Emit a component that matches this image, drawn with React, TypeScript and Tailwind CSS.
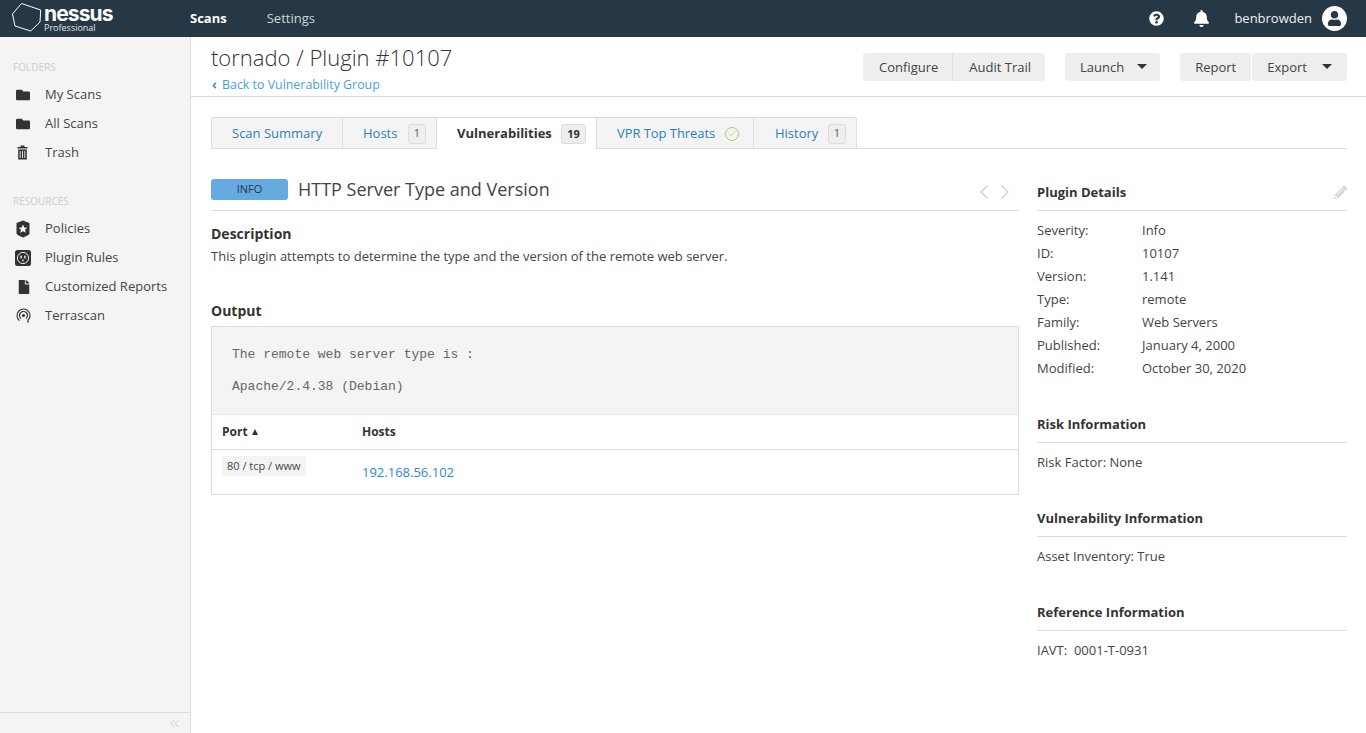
import { ChevronLeft, ChevronRight, ChevronsLeft, Check } from 'lucide-react';
import { FaBell, FaQuestionCircle, FaFolder, FaFile, FaPencilAlt, FaUser } from 'react-icons/fa';

function ShieldIcon() {
  return (
    <svg width="14" height="18" viewBox="0 0 14 18" className="ml-[1px] shrink-0">
      <path d="M7 0.5 L13.5 3 V13.5 Q13.5 15 7 17.5 Q0.5 15 0.5 13.5 V3 Z" fill="#333" />
      <path d="M7 4.5 L8.3 7.5 L11.3 7.7 L9 9.8 L9.8 12.8 L7 11.2 L4.2 12.8 L5 9.8 L2.7 7.7 L5.7 7.5 Z" fill="#f5f5f5" />
    </svg>
  );
}

function PlugIcon() {
  return (
    <svg width="16" height="16" viewBox="0 0 16 16" className="shrink-0">
      <rect width="16" height="16" rx="2.5" fill="#333" />
      <circle cx="8" cy="8" r="5.6" fill="none" stroke="#e8e8e8" strokeWidth="1" />
      <rect x="5.4" y="5.6" width="1.4" height="2.8" fill="#f5f5f5" />
      <rect x="9.2" y="5.6" width="1.4" height="2.8" fill="#f5f5f5" />
      <rect x="7.3" y="9.6" width="1.4" height="1.6" fill="#f5f5f5" />
    </svg>
  );
}

function TrashIcon() {
  return (
    <svg width="11" height="15" viewBox="0 0 11 15" className="ml-[2px] shrink-0">
      <path d="M3.5 2 V0.5 H7.5 V2 H10.5 V3.5 H0.5 V2 Z" fill="#333" />
      <path d="M1.2 4.5 H9.8 V14.5 H1.2 Z" fill="#333" />
      <path d="M3.2 6 V13 M5.5 6 V13 M7.8 6 V13" stroke="#f5f5f5" strokeWidth="0.9" />
    </svg>
  );
}

function ScanIcon() {
  return (
    <svg width="15" height="15" viewBox="0 0 15 15" fill="none" stroke="#333" className="ml-[1px] shrink-0">
      <path d="M3.5 12.6 A6.5 6.5 0 1 1 11.5 12.6" strokeWidth="1.2" />
      <path d="M5 10.6 A4 4 0 1 1 10 10.6" strokeWidth="1.2" />
      <path d="M11.6 12.6 L12.5 14.5" strokeWidth="1.3" />
      <circle cx="7.5" cy="7.5" r="1.6" fill="#333" stroke="none" />
    </svg>
  );
}

function SideItem({ icon, label }: { icon: React.ReactNode; label: string }) {
  return (
    <div className="flex items-center h-[29px] pl-[15px] text-[13px] text-[#444]">
      <span className="w-[30px] flex items-center">{icon}</span>
      {label}
    </div>
  );
}

function Btn({ children, caret, className = '' }: { children: React.ReactNode; caret?: string; className?: string }) {
  return (
    <div className={`h-[28px] pt-[1px] bg-[#eeeeee] flex items-center text-[13px] text-[#444] ${className}`}>
      {children}
      {caret && <span className={`${caret} -mt-[2px] w-0 h-0 border-x-[5px] border-x-transparent border-t-[5px] border-t-[#333]`} />}
    </div>
  );
}

function Badge({ children, bold }: { children: React.ReactNode; bold?: boolean }) {
  return (
    <span className={`ml-auto h-[20px] flex items-center justify-center rounded-[3px] border border-[#dcdcdc] bg-[#eeeeee] text-[11px] ${bold ? 'font-bold text-[#333] w-[25px]' : 'text-[#555] w-[18px]'}`}>
      {children}
    </span>
  );
}

function Tab({ children, active, className = '' }: { children: React.ReactNode; active?: boolean; className?: string }) {
  if (active) {
    return (
      <div className={`h-[32px] pt-[1px] flex items-center whitespace-nowrap bg-white border-t border-[#dcdcdc] -mb-px text-[13px] font-bold text-[#333] ${className}`}>
        {children}
      </div>
    );
  }
  return (
    <div className={`h-[32px] pt-[1px] flex items-center whitespace-nowrap bg-[#f4f4f4] border border-[#dcdcdc] -mb-px -ml-px first:ml-0 text-[13px] text-[#2a7fc1] ${className}`}>
      {children}
    </div>
  );
}

function SectionHead({ title, children, className = '' }: { title: string; children?: React.ReactNode; className?: string }) {
  return (
    <div className={`flex items-center justify-between border-b border-[#dcdcdc] pt-[1px] text-[13px] font-bold text-[#333] ${className}`}>
      {title}
      {children}
    </div>
  );
}

const details = [
  ['Severity:', 'Info'],
  ['ID:', '10107'],
  ['Version:', '1.141'],
  ['Type:', 'remote'],
  ['Family:', 'Web Servers'],
  ['Published:', 'January 4, 2000'],
  ['Modified:', 'October 30, 2020'],
];

export default function App() {
  return (
    <div className="h-[733px] flex flex-col overflow-hidden bg-white font-['Open_Sans',sans-serif] text-[#444]">
      <header className="h-[37px] shrink-0 bg-[#263746] flex items-center text-white">
        <div className="w-[190px] h-[37px] pl-[12px] flex items-start">
          <svg width="30" height="29" viewBox="0 0 30 29" fill="none" stroke="#fff" strokeWidth="1" className="mt-[3px] shrink-0">
            <path d="M9.5 0.5 L28.7 7 L28 19 L18.7 28 L3 23 L0.5 11 Z" />
          </svg>
          <div className="ml-[2px] pt-[6px] flex flex-col">
            <span className="font-['Inter',sans-serif] text-[21px] font-bold leading-[15px] tracking-[-0.9px]">nessus</span>
            <span className="mt-[2px] text-[9px] leading-[9px] text-[#e6e6e6]">Professional</span>
          </div>
        </div>
        <span className="text-[13px] font-bold">Scans</span>
        <span className="ml-[40px] text-[13px] text-[#d0d5d9]">Settings</span>
        <div className="ml-auto flex items-center pr-[19px]">
          <FaQuestionCircle size={15} />
          <FaBell size={17} className="ml-[29px]" />
          <span className="ml-[24px] text-[13px] text-[#eef0f2]">benbrowden</span>
          <span className="ml-[10px] w-[25px] h-[25px] rounded-full bg-white flex items-center justify-center overflow-hidden">
            <FaUser size={15} className="text-[#263746]" />
          </span>
        </div>
      </header>

      <div className="flex flex-1 min-h-0">
        <aside className="w-[191px] shrink-0 bg-[#f4f4f4] border-r border-[#dcdcdc] flex flex-col">
          <div className="flex-1 pt-[23px]">
            <div className="pl-[13px] text-[10px] leading-[14px] text-[#cccccc] mb-[6px]">FOLDERS</div>
            <SideItem icon={<FaFolder size={14} className="ml-[1px] text-[#333]" />} label="My Scans" />
            <SideItem icon={<FaFolder size={14} className="ml-[1px] text-[#333]" />} label="All Scans" />
            <SideItem icon={<TrashIcon />} label="Trash" />
            <div className="pl-[13px] mt-[27px] text-[10px] leading-[14px] text-[#cccccc] mb-[6px]">RESOURCES</div>
            <SideItem icon={<ShieldIcon />} label="Policies" />
            <SideItem icon={<PlugIcon />} label="Plugin Rules" />
            <SideItem icon={<FaFile size={14} className="text-[#333] ml-[2px]" />} label="Customized Reports" />
            <SideItem icon={<ScanIcon />} label="Terrascan" />
          </div>
          <div className="h-[21px] border-t border-[#dcdcdc] flex items-center justify-end pr-[8px]">
            <ChevronsLeft size={15} strokeWidth={1.5} className="text-[#cccccc]" />
          </div>
        </aside>

        <main className="flex-1 min-w-0 flex flex-col">
          <div className="h-[60px] shrink-0 border-b border-[#dcdcdc] pl-[20px] pr-[19px] flex justify-between">
            <div>
              <h1 className="text-[22px] font-light leading-[32px] mt-[4px] text-[#333]">tornado / Plugin #10107</h1>
              <a className="mt-[3px] flex items-center text-[12.4px] leading-[18px] text-[#4a9fdb]">
                <ChevronLeft size={9} strokeWidth={4} className="-ml-[1px] text-[#2a7fc1] mr-[3px]" />
                Back to Vulnerability Group
              </a>
            </div>
            <div className="flex items-start pt-[16px]">
              <Btn className="pl-[16px] pr-[14px] rounded-l-[3px] border-r border-[#e0e0e0]">Configure</Btn>
              <Btn className="pl-[16px] pr-[14px] rounded-r-[3px]">Audit Trail</Btn>
              <Btn caret="ml-[13px]" className="ml-[20px] pl-[15px] pr-[13px] rounded-[3px]">Launch</Btn>
              <Btn className="ml-[20px] px-[15px] rounded-[3px]">Report</Btn>
              <Btn caret="ml-[15px]" className="ml-[1px] px-[15px] rounded-[3px]">Export</Btn>
            </div>
          </div>

          <div className="pl-[20px] pr-[19px]">
            <div className="mt-[20px] flex border-b border-[#dcdcdc] h-[32px]">
              <Tab className="w-[132px] pl-[20px] rounded-tl-[2px]">Scan Summary</Tab>
              <Tab className="w-[95px] pl-[20px] pr-[10px]">Hosts<Badge>1</Badge></Tab>
              <Tab active className="w-[160px] pl-[20px] pr-[11px]">Vulnerabilities<Badge bold>19</Badge></Tab>
              <Tab className="w-[158px] pl-[20px] pr-[14px] tracking-[-0.06px]">
                VPR Top Threats
                <span className="ml-auto w-[14px] h-[14px] rounded-full border border-[#a3cf75] flex items-center justify-center">
                  <Check size={10} strokeWidth={1.5} className="text-[#a3cf75]" />
                </span>
              </Tab>
              <Tab className="w-[104px] pl-[21px] pr-[10px] rounded-tr-[2px]">History<Badge>1</Badge></Tab>
            </div>

            <div className="flex justify-between">
              <div className="w-[808px]">
                <div className="mt-[20px] h-[42px] border-b border-[#dcdcdc] flex items-start">
                  <span className="mt-[10px] w-[77px] h-[21px] bg-[#66aae2] rounded-[3px] flex items-center justify-center text-[11px] text-[#263746]">INFO</span>
                  <span className="ml-[10px] mt-[7px] text-[18px] leading-[26px] text-[#444]">HTTP Server Type and Version</span>
                  <span className="ml-auto mt-[11px] mr-[2px] flex text-[#cccccc]">
                    <ChevronLeft size={24} strokeWidth={1.25} />
                    <ChevronRight size={24} strokeWidth={1.25} className="-ml-[3px]" />
                  </span>
                </div>
                <h2 className="mt-[13px] text-[14px] leading-[20px] font-bold text-[#333]">Description</h2>
                <p className="mt-[3px] text-[13px] leading-[18px]">This plugin attempts to determine the type and the version of the remote web server.</p>
                <h2 className="mt-[36px] text-[14px] leading-[20px] font-bold text-[#333]">Output</h2>
                <div className="mt-[5px] border border-[#dcdcdc]">
                  <pre className="h-[88px] bg-[#f4f4f4] border-b border-dotted border-[#dcdcdc] pl-[20px] pt-[20px] font-['Liberation_Mono',monospace] text-[13px] leading-[16px] text-[#666]">{'The remote web server type is :\n\nApache/2.4.38 (Debian)'}</pre>
                  <div className="h-[35px] border-b border-[#dcdcdc] flex items-center text-[12px] font-bold text-[#333]">
                    <span className="w-[150px] pl-[10px] flex items-center">
                      Port
                      <span className="ml-[4px] w-0 h-0 border-x-[3.5px] border-x-transparent border-b-[6px] border-b-[#333]" />
                    </span>
                    Hosts
                  </div>
                  <div className="h-[44px] flex items-start">
                    <span className="w-[150px] pl-[10px] pt-[6px]">
                      <span className="block w-fit h-[20px] px-[5px] bg-[#f4f4f4] rounded-[3px] text-[11px] leading-[20px]">80 / tcp / www</span>
                    </span>
                    <a className="mt-[13px] text-[13px] leading-[18px] text-[#2a8ad4]">192.168.56.102</a>
                  </div>
                </div>
              </div>

              <div className="w-[310px] text-[13px]">
                <SectionHead title="Plugin Details" className="mt-[25px] h-[37px]">
                  <FaPencilAlt size={13} className="text-[#d5d5d5]" />
                </SectionHead>
                <dl className="mt-[8px]">
                  {details.map(([k, v]) => (
                    <div key={k} className="flex h-[23px] items-center">
                      <dt className="w-[105px]">{k}</dt>
                      <dd>{v}</dd>
                    </div>
                  ))}
                </dl>
                <SectionHead title="Risk Information" className="mt-[26px] h-[37px]" />
                <p className="mt-[10px] leading-[18px]">Risk Factor: None</p>
                <SectionHead title="Vulnerability Information" className="mt-[29px] h-[37px]" />
                <p className="mt-[10px] leading-[18px]">Asset Inventory: True</p>
                <SectionHead title="Reference Information" className="mt-[29px] h-[37px]" />
                <p className="mt-[10px] leading-[18px] whitespace-pre">IAVT:  0001-T-0931</p>
              </div>
            </div>
          </div>
        </main>
      </div>
    </div>
  );
}
